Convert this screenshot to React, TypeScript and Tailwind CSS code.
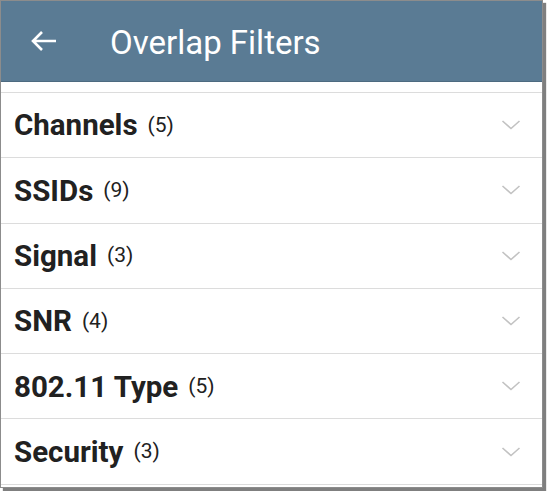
import React from "react";

const rows = [
  { name: "Channels", count: 5 },
  { name: "SSIDs", count: 9 },
  { name: "Signal", count: 3 },
  { name: "SNR", count: 4 },
  { name: "802.11 Type", count: 5 },
  { name: "Security", count: 3 },
];

function Chevron() {
  return (
    <svg width="20" height="12" viewBox="0 0 20 12" fill="none">
      <path d="M1.5 2 L10 9.5 L18.5 2" stroke="#c2c2c2" strokeWidth="1.6" fill="none" />
    </svg>
  );
}

export default function App() {
  return (
    <div className="w-[547px] h-[491px] bg-white" style={{ fontFamily: "Roboto, 'Liberation Sans', sans-serif" }}>
      <div className="w-[543px] h-[488px] border border-[#8c8c8c] shadow-[3px_3px_1px_rgba(0,0,0,0.5)] bg-white flex flex-col overflow-hidden">
        <div className="h-[81px] bg-[#5a7b94] flex items-center border-b border-[#4d6a80]">
          <svg width="28" height="22" viewBox="0 0 28 22" className="ml-[29px]" fill="none">
            <path d="M26 11 H3 M12 2 L3 11 L12 20" stroke="white" strokeWidth="2.6" fill="none" />
          </svg>
          <span className="ml-[52px] mt-[2px] text-white text-[33px] leading-none">Overlap Filters</span>
        </div>
        <div className="h-[10px]" />
        <div className="flex flex-col border-t border-[#dcdcdc]">
          {rows.map((r) => (
            <div key={r.name} className="h-[65.3px] flex items-center border-b border-[#dcdcdc] pl-[13px] pr-[21px]">
              <span className="text-[29.5px] font-bold text-[#212121] leading-none mt-[2px]">{r.name}</span>
              <span className="ml-[10px] text-[21px] text-[#212121] leading-none">({r.count})</span>
              <div className="flex-1" />
              <Chevron />
            </div>
          ))}
        </div>
      </div>
    </div>
  );
}
